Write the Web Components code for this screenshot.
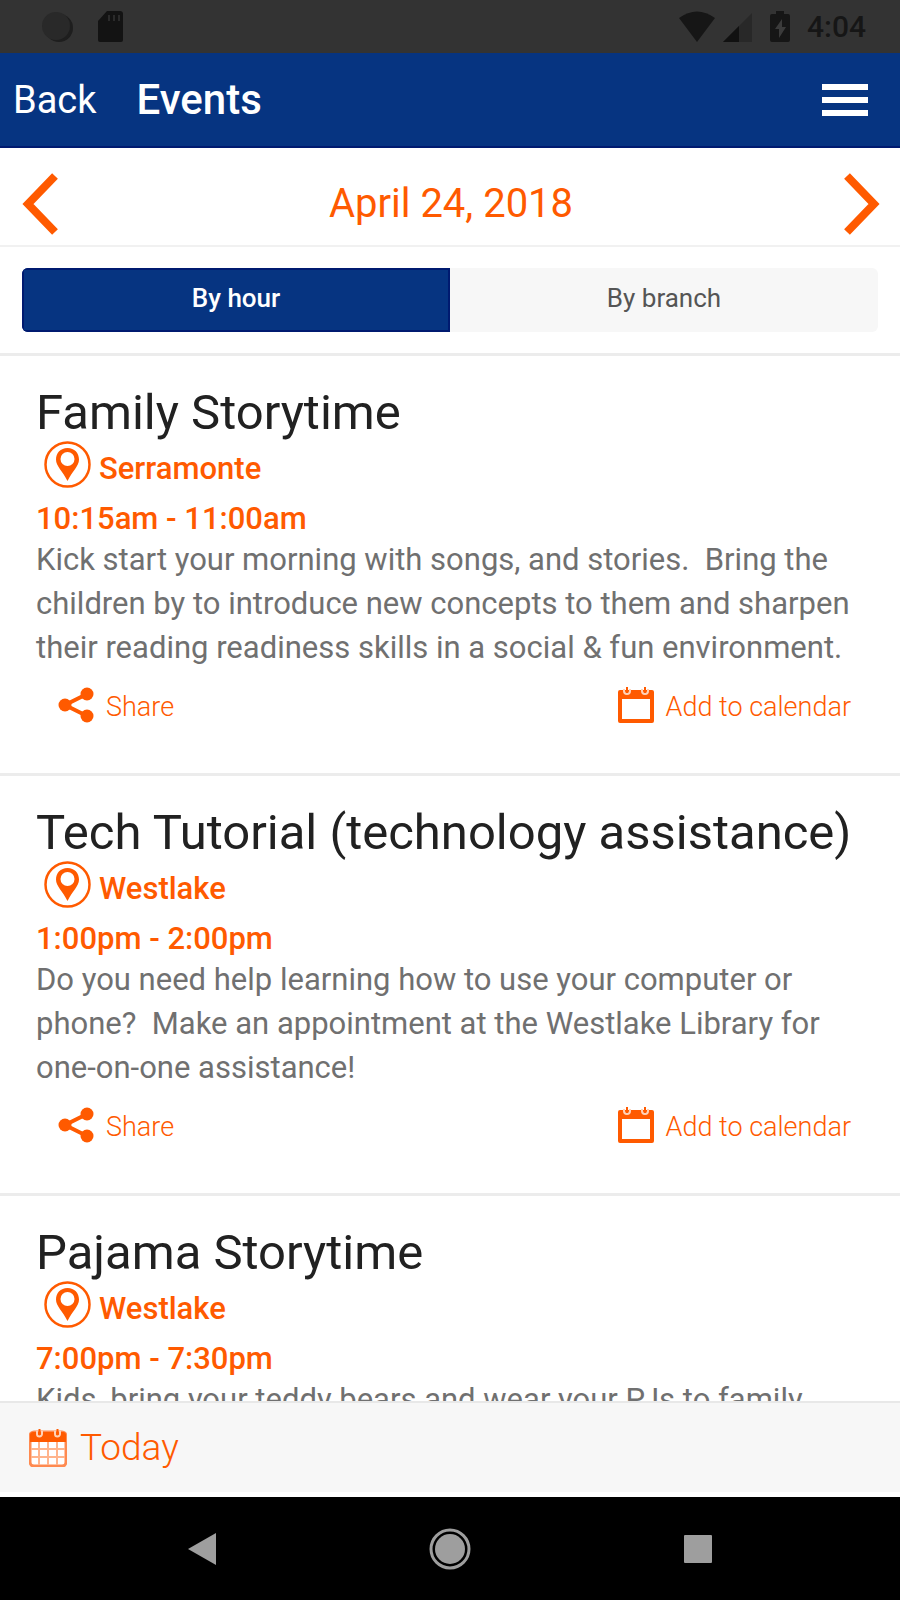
<!DOCTYPE html>
<html lang="en">
<head>
<meta charset="utf-8">
<meta name="viewport" content="width=device-width, initial-scale=1">
<title>Events</title>
<style>
  html,
  body {
    height: 100%;
    margin: 0;
  }

  body {
    font-family: Roboto, "Liberation Sans", sans-serif;
    background-color: #fff;
    color: #212121;
    --brand: #063481;
    --accent: #ff5a00;
    --line: #ececec;
    --panel: #f7f7f7;
  }
</style>
</head>
<body>
<events-app>
  <status-bar slot="top" time="4:04"></status-bar>
  <app-header slot="top" back="Back">Events</app-header>
  <date-nav slot="top">April 24, 2018</date-nav>
  <view-switch slot="top" options="By hour,By branch"></view-switch>

  <event-card name="Family Storytime" branch="Serramonte" hours="10:15am - 11:00am">Kick start your morning with songs, and stories.&nbsp; Bring the children by to introduce new concepts to them and sharpen their reading readiness skills in a social &amp; fun environment.</event-card>
  <event-card name="Tech Tutorial (technology assistance)" branch="Westlake" hours="1:00pm - 2:00pm">Do you need help learning how to use your computer or phone?&nbsp; Make an appointment at the Westlake Library for one-on-one assistance!</event-card>
  <event-card name="Pajama Storytime" branch="Westlake" hours="7:00pm - 7:30pm">Kids, bring your teddy bears and wear your PJs to family</event-card>

  <today-bar slot="bottom">Today</today-bar>
  <system-nav slot="bottom"></system-nav>
</events-app>

<script>
const reset = `
  :host,
  * {
    padding: 0;
    margin: 0;
    box-sizing: border-box;
  }

  svg {
    display: block;
    flex: none;
  }

  button,
  a {
    font: inherit;
    color: inherit;
    background: none;
    border: none;
    text-decoration: none;
    cursor: pointer;
  }
`;

class EventsApp extends HTMLElement {
  constructor() {
    super();
    this.attachShadow({ mode: 'open' }).innerHTML = `
      <style>
        ${reset}
        :host {
          display: flex;
          flex-direction: column;
          height: 100vh;
        }

        main {
          flex: 1;
          min-height: 0;
          overflow: hidden;
        }
      </style>
      <slot name="top"></slot>
      <main><slot></slot></main>
      <slot name="bottom"></slot>
    `;
  }
}

class StatusBar extends HTMLElement {
  constructor() {
    super();
    this.attachShadow({ mode: 'open' });
  }

  connectedCallback() {
    this.shadowRoot.innerHTML = `
      <style>
        ${reset}
        :host {
          display: flex;
          justify-content: space-between;
          align-items: center;
          height: 53px;
          padding: 0 34px 0 41px;
          background-color: #333;
          color: #161616;
          font-size: 30px;
          font-weight: 500;
        }

        div {
          display: flex;
          align-items: center;
        }

        .left {
          gap: 24px;
        }

        .right {
          gap: 8px;
        }

        .battery {
          margin: 0 9px 0 10px;
        }
      </style>
      <div class="left">
        <svg width="33" height="32" viewBox="0 0 33 32">
          <circle cx="18" cy="17" r="14" fill="#1e1e1e"/>
          <circle cx="15" cy="15" r="14" fill="#292929"/>
        </svg>
        <svg width="26" height="32" viewBox="0 0 26 32">
          <path d="M9 0h13a3 3 0 0 1 3 3v26a2 2 0 0 1-2 2H2a2 2 0 0 1-2-2V10z" fill="#131313"/>
          <path d="M11 4v6M16 4v6M21 4v6" stroke="#2b2b2b" stroke-width="2"/>
        </svg>
      </div>
      <div class="right">
        <svg width="36" height="32" viewBox="0 0 36 32">
          <path d="M0 7Q18-6 36 7L18 31z" fill="currentColor"/>
        </svg>
        <svg width="29" height="32" viewBox="0 0 29 32">
          <path d="M29 2v29H0z" fill="#282828"/>
          <path d="M16 15v16H0z" fill="#111"/>
        </svg>
        <svg class="battery" width="20" height="32" viewBox="0 0 20 32">
          <path d="M6 3V0h8v3h4a2 2 0 0 1 2 2v24a2 2 0 0 1-2 2H2a2 2 0 0 1-2-2V5a2 2 0 0 1 2-2z" fill="currentColor"/>
          <path d="M12 8L5 18h4v9l7-11h-4z" fill="#3b3b3b"/>
        </svg>
        <span>${this.getAttribute('time')}</span>
      </div>
    `;
  }
}

class AppHeader extends HTMLElement {
  constructor() {
    super();
    this.attachShadow({ mode: 'open' });
  }

  connectedCallback() {
    this.shadowRoot.innerHTML = `
      <style>
        ${reset}
        :host {
          display: flex;
          align-items: center;
          height: 95px;
          padding: 0 32px 0 13px;
          background-color: var(--brand);
          border-bottom: 2px solid #001a70;
          color: #fff;
        }

        a {
          font-size: 38px;
        }

        h1 {
          flex: 1;
          margin-left: 40px;
          font-size: 42px;
          font-weight: 500;
        }
      </style>
      <a href="#">${this.getAttribute('back')}</a>
      <h1><slot></slot></h1>
      <button aria-label="Menu">
        <svg width="46" height="34" viewBox="0 0 46 34">
          <path d="M0 4h46M0 17h46M0 30h46" stroke="currentColor" stroke-width="6"/>
        </svg>
      </button>
    `;
  }
}

class DateNav extends HTMLElement {
  constructor() {
    super();
    this.attachShadow({ mode: 'open' }).innerHTML = `
      <style>
        ${reset}
        :host {
          display: flex;
          justify-content: space-between;
          align-items: center;
          height: 99px;
          padding: 14px 20px 0 22px;
          border-bottom: 2px solid #f1f1f1;
          color: var(--accent);
          font-size: 40px;
        }

        path {
          fill: none;
          stroke: currentColor;
          stroke-width: 8;
        }
      </style>
      <button aria-label="Previous day">
        <svg width="36" height="62" viewBox="0 0 36 62"><path d="M33 3L6 31l27 28"/></svg>
      </button>
      <span><slot></slot></span>
      <button aria-label="Next day">
        <svg width="36" height="62" viewBox="0 0 36 62"><path d="M3 3l27 28L3 59"/></svg>
      </button>
    `;
  }
}

class ViewSwitch extends HTMLElement {
  constructor() {
    super();
    this.attachShadow({ mode: 'open' });
    this.active = 0;
  }

  connectedCallback() {
    this.render();
  }

  render() {
    const options = this.getAttribute('options').split(',');

    this.shadowRoot.innerHTML = `
      <style>
        ${reset}
        :host {
          display: block;
          padding: 21px 22px;
          border-bottom: 3px solid var(--line);
        }

        div {
          display: flex;
          height: 64px;
          border-radius: 6px;
          overflow: hidden;
          background-color: var(--panel);
        }

        button {
          flex: 1;
          padding-bottom: 4px;
          font-size: 26px;
          color: #555;
        }

        button[aria-pressed="true"] {
          background-color: var(--brand);
          box-shadow: inset 0 0 0 2px #001a70;
          font-weight: 500;
          color: #fff;
        }
      </style>
      <div>
        ${options.map((option, i) => `<button aria-pressed="${i === this.active}">${option}</button>`).join('')}
      </div>
    `;

    this.shadowRoot.querySelectorAll('button').forEach((button, i) => {
      button.addEventListener('click', () => {
        this.active = i;
        this.render();
      });
    });
  }
}

class EventCard extends HTMLElement {
  constructor() {
    super();
    this.attachShadow({ mode: 'open' });
  }

  connectedCallback() {
    this.shadowRoot.innerHTML = `
      <style>
        ${reset}
        :host {
          display: block;
          padding: 29px 36px 44px;
          border-bottom: 3px solid var(--line);
        }

        h2 {
          font-size: 49px;
          font-weight: 400;
          line-height: 56px;
        }

        .branch,
        .hours {
          color: var(--accent);
          font-size: 31px;
          font-weight: 500;
        }

        .branch {
          display: flex;
          gap: 8px;
          padding-left: 8px;
          line-height: 56px;
        }

        .hours {
          margin-top: 3px;
          line-height: 38px;
        }

        .about {
          font-size: 31px;
          line-height: 44px;
          color: #707070;
        }

        .actions {
          display: flex;
          justify-content: space-between;
          padding: 15px 13px 0 22px;
          color: var(--accent);
        }

        .actions button {
          display: flex;
          align-items: center;
          gap: 12px;
          font-size: 27px;
          font-weight: 300;
          line-height: 44px;
        }

        .actions svg {
          margin-bottom: 4px;
        }
      </style>
      <h2>${this.getAttribute('name')}</h2>
      <p class="branch">
        <svg width="47" height="47" viewBox="0 0 47 47">
          <circle cx="23.500" cy="23.500" r="22" fill="none" stroke="currentColor" stroke-width="2.500"/>
          <path d="M23.500 7C16.500 7 12 12 12 18.500C12 25 18.500 30 23.500 40C28.500 30 35 25 35 18.500C35 12 30.500 7 23.500 7z" fill="currentColor"/>
          <circle cx="23.500" cy="18" r="7" fill="#fff"/>
        </svg>
        <span>${this.getAttribute('branch')}</span>
      </p>
      <p class="hours">${this.getAttribute('hours')}</p>
      <p class="about"><slot></slot></p>
      <div class="actions">
        <button>
          <svg width="36" height="36" viewBox="0 0 36 36">
            <path d="M29 7L7 18l22 11" fill="none" stroke="currentColor" stroke-width="4"/>
            <circle cx="7" cy="18" r="6.500" fill="currentColor"/>
            <circle cx="29" cy="7" r="6.500" fill="currentColor"/>
            <circle cx="29" cy="29" r="6.500" fill="currentColor"/>
          </svg>
          Share
        </button>
        <button>
          <svg width="36" height="36" viewBox="0 0 36 36">
            <path d="M2 3h32a2 2 0 0 1 2 2v29a2 2 0 0 1-2 2H2a2 2 0 0 1-2-2V5a2 2 0 0 1 2-2zM4 12v20h28V12z" fill="currentColor" fill-rule="evenodd"/>
            <path d="M6 2v2a3 3 0 0 0 6 0V2M24 2v2a3 3 0 0 0 6 0V2" fill="none" stroke="#ffd2b8" stroke-width="2"/>
            <path d="M9 0v6M27 0v6" stroke="currentColor" stroke-width="2"/>
          </svg>
          Add to calendar
        </button>
      </div>
    `;
  }
}

class TodayBar extends HTMLElement {
  constructor() {
    super();
    this.attachShadow({ mode: 'open' }).innerHTML = `
      <style>
        ${reset}
        :host {
          display: flex;
          align-items: center;
          height: 96px;
          padding-left: 29px;
          background-color: var(--panel);
          border-top: 2px solid #e8e8e8;
          border-bottom: 5px solid #fff;
        }

        button {
          display: flex;
          align-items: center;
          gap: 13px;
          color: var(--accent);
          font-size: 37px;
          font-weight: 300;
        }
      </style>
      <button>
        <svg width="38" height="38" viewBox="0 0 38 38">
          <rect x="1" y="3" width="36" height="34" rx="4" fill="#fff" stroke="#ff8a50" stroke-width="3"/>
          <path d="M10 13v23M19 13v23M28 13v23M2 20h34M2 28h34" stroke="#ffb48c" stroke-width="2"/>
          <path d="M1 13V6a3 3 0 0 1 3-3h30a3 3 0 0 1 3 3v7z" fill="currentColor"/>
          <path d="M8 2v3a2.500 2.500 0 0 0 5 0V2M26 2v3a2.500 2.500 0 0 0 5 0V2" fill="none" stroke="#ffd2b8" stroke-width="2"/>
          <path d="M10.500 0v6M28.500 0v6" stroke="currentColor" stroke-width="2"/>
        </svg>
        <slot></slot>
      </button>
    `;
  }
}

class SystemNav extends HTMLElement {
  constructor() {
    super();
    this.attachShadow({ mode: 'open' }).innerHTML = `
      <style>
        ${reset}
        :host {
          display: flex;
          justify-content: center;
          align-items: center;
          gap: 206px;
          height: 103px;
          background-color: #000;
          color: #9e9e9e;
        }
      </style>
      <button aria-label="Back">
        <svg width="42" height="42" viewBox="0 0 42 42"><path d="M7 21L35 5v32z" fill="currentColor"/></svg>
      </button>
      <button aria-label="Home">
        <svg width="42" height="42" viewBox="0 0 42 42">
          <circle cx="21" cy="21" r="19" fill="none" stroke="currentColor" stroke-width="3"/>
          <circle cx="21" cy="21" r="15" fill="currentColor"/>
        </svg>
      </button>
      <button aria-label="Recent apps">
        <svg width="42" height="42" viewBox="0 0 42 42"><rect x="7" y="7" width="28" height="28" rx="1" fill="currentColor"/></svg>
      </button>
    `;
  }
}

customElements.define('events-app', EventsApp);
customElements.define('status-bar', StatusBar);
customElements.define('app-header', AppHeader);
customElements.define('date-nav', DateNav);
customElements.define('view-switch', ViewSwitch);
customElements.define('event-card', EventCard);
customElements.define('today-bar', TodayBar);
customElements.define('system-nav', SystemNav);
</script>
</body>
</html>
